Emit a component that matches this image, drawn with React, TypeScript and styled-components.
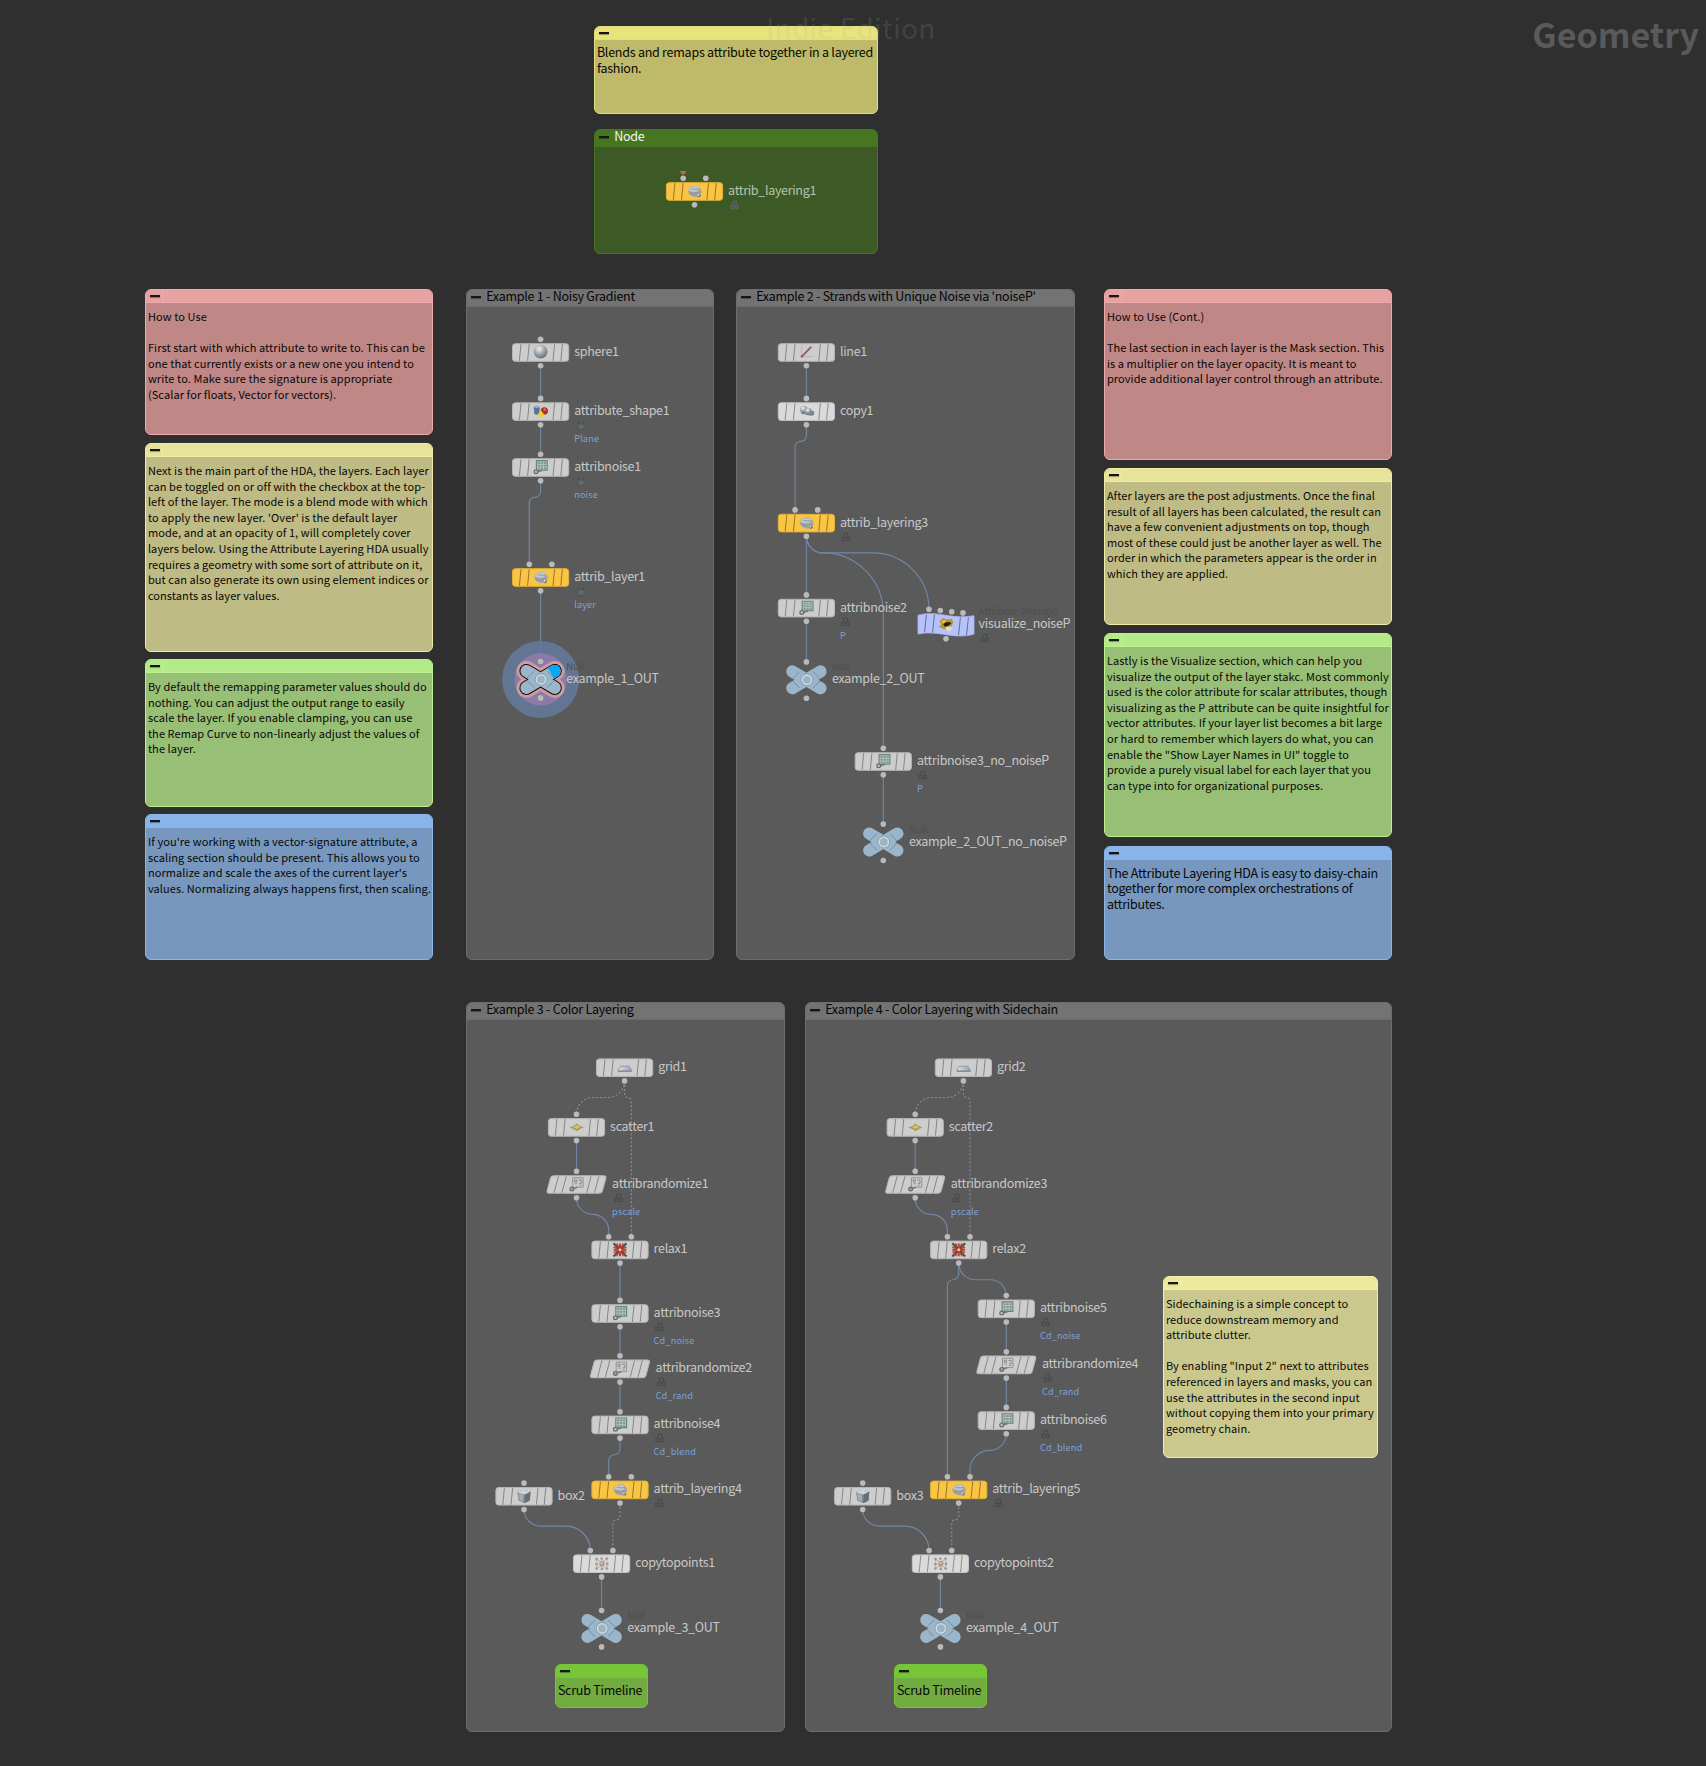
import React from "react";
import styled, { createGlobalStyle } from "styled-components";

const FONT = `"Noto Sans CJK SC", "Noto Sans", sans-serif`;

const GlobalStyle = createGlobalStyle`
  *, *::before, *::after { box-sizing: border-box; }
  body { margin: 0; background: #2f2f2f; font-family: ${FONT}; }
`;

/* ---------- page layout ---------- */

const Page = styled.main`
  position: relative;
  width: 1706px;
  height: 1766px;
  overflow: hidden;
  background: #2f2f2f;
  display: flex;
  flex-direction: column;
`;

const IntroStack = styled.section`
  display: flex;
  flex-direction: column;
  gap: 15px;
  width: 284px;
  margin: 26px 0 0 594px;
`;

const ExampleRow = styled.section<{ $top: number; $left: number }>`
  display: flex;
  align-items: flex-start;
  margin: ${(p) => p.$top}px 0 0 ${(p) => p.$left}px;
`;

const NoteColumn = styled.div<{ $ml?: number }>`
  display: flex;
  flex-direction: column;
  width: 288px;
  margin-left: ${(p) => p.$ml || 0}px;
`;

/* ---------- sticky notes ---------- */

type Tone = { head: string; body: string; line: string; ink?: string };

const TONES: Record<string, Tone> = {
  gold: { head: "#e8e37b", body: "#bfba6a", line: "#e4de7e" },
  red: { head: "#e9a2a2", body: "#c08787", line: "#eeaaab" },
  yellow: { head: "#e8e39a", body: "#bfbb84", line: "#f0eca6" },
  green: { head: "#b4ea88", body: "#98bf76", line: "#bcf190" },
  blue: { head: "#89b4ea", body: "#7797be", line: "#8cb5e8" },
  pale: { head: "#ede99d", body: "#cbc88e", line: "#f3efa6" },
  lime: { head: "#76c637", body: "#70ac40", line: "#76c43a" },
  forest: { head: "#46761f", body: "#3d5a26", line: "#47741f", ink: "#f2f5ef" },
  gray: { head: "#737373", body: "#5a5a5a", line: "#6d6d6d" },
};

const Panel = styled.article<{ $tone: Tone; $h: number; $w?: number; $mt?: number; $ml?: number }>`
  display: flex;
  flex-direction: column;
  flex: none;
  width: ${(p) => (p.$w ? `${p.$w}px` : "100%")};
  height: ${(p) => p.$h}px;
  margin-top: ${(p) => p.$mt || 0}px;
  margin-left: ${(p) => p.$ml || 0}px;
  border: 1px solid ${(p) => p.$tone.line};
  border-radius: 6px;
  background: ${(p) => p.$tone.body};
`;

const Header = styled.header<{ $tone: Tone; $h: number }>`
  display: flex;
  align-items: stretch;
  flex: none;
  height: ${(p) => p.$h - 1}px;
  background: ${(p) => p.$tone.head};
  border-bottom: 1px solid ${(p) => p.$tone.line};
  border-radius: 5px 5px 0 0;
`;

const Collapse = styled.span<{ $tone: Tone; $bar: number }>`
  flex: none;
  width: 17px;
  border-right: 1px solid ${(p) => p.$tone.line};
  &::before {
    content: "";
    display: block;
    width: 10px;
    height: 2px;
    margin: ${(p) => p.$bar}px 0 0 4.4px;
    background: #15151a;
    box-shadow: 0 1px 1px rgba(0, 0, 0, 0.35);
  }
`;

const Title = styled.h2<{ $ink?: string }>`
  margin: 0 0 0 2.2px;
  font: 400 12.5px/12px ${FONT};
  letter-spacing: -0.255px;
  color: ${(p) => p.$ink || "#050505"};
  white-space: nowrap;
`;

const NoteText = styled.p<{ $large?: boolean }>`
  margin: 0;
  padding: ${(p) => (p.$large ? 4.3 : 6.1)}px 0 0 ${(p) => (p.$large ? 1.9 : 1.9)}px;
  color: #080804;
  white-space: pre;
  font-size: ${(p) => (p.$large ? 12.5 : 11)}px;
  line-height: 15.6px;
  letter-spacing: ${(p) => (p.$large ? -0.245 : 0.087)}px;
`;

type NoteProps = { tone: string; h: number; w?: number; mt?: number; ml?: number; large?: boolean; text: string };

const Note = ({ tone, h, w, mt, ml, large, text }: NoteProps) => {
  const t = TONES[tone];
  return (
    <Panel $tone={t} $h={h} $w={w} $mt={mt} $ml={ml}>
      <Header $tone={t} $h={14}>
        <Collapse $tone={t} $bar={5} />
      </Header>
      <NoteText $large={large}>{text}</NoteText>
    </Panel>
  );
};

type BoxProps = { tone?: string; title: string; h: number; w?: number; ml?: number; children?: React.ReactNode };

const NetworkBox = ({ tone = "gray", title, h, w, ml, children }: BoxProps) => {
  const t = TONES[tone];
  return (
    <Panel as="section" $tone={t} $h={h} $w={w} $ml={ml}>
      <Header $tone={t} $h={18}>
        <Collapse $tone={t} $bar={6} />
        <Title $ink={t.ink}>{title}</Title>
      </Header>
      {children}
    </Panel>
  );
};

/* ---------- wires ---------- */

const WireLayer = styled.svg`
  position: absolute;
  inset: 0;
  pointer-events: none;
`;

type Pt = [number, number];

const DROP = 16.6;

function wirePath([x1, y1]: Pt, [x2, y2]: Pt) {
  const dx = x2 - x1;
  const span = Math.abs(dx);
  if (span < 0.5) return `M${x1},${y1}V${y2}`;
  const dir = Math.sign(dx);
  const mid = y1 + DROP;
  const r1 = Math.min(span / 2, DROP);
  const r2 = Math.min(span - r1, y2 - mid);
  const first = dir > 0 ? 0 : 1;
  return [
    `M${x1},${y1}V${mid - r1}`,
    `A${r1},${r1} 0 0 ${first} ${x1 + dir * r1},${mid}`,
    `H${x2 - dir * r2}`,
    `A${r2},${r2} 0 0 ${1 - first} ${x2},${mid + r2}`,
    `V${y2}`,
  ].join("");
}

/* ---------- node icons ---------- */

type IconName =
  | "layers" | "sphere" | "shapes" | "noise" | "random" | "line" | "copy"
  | "grid" | "scatter" | "relax" | "box" | "points" | "wrangle";

const SheetIcon = ({ cell, paper, edge }: { cell: string; paper: string; edge: string }) => (
  <g>
    <path d="M-4.2,-6.8H6.6V2.8H1.2L-4.2,3.2Z" fill={paper} stroke={edge} strokeWidth="1.1" />
    {[-5.4, -2.6, 0.2].map((y) =>
      [-2.8, 0.2, 3.2].map((x) => <rect key={`${x}${y}`} x={x} y={y} width="2.1" height="1.9" fill={cell} />)
    )}
    <path d="M1.4,2.8L-2.6,4.2" stroke="#6f7b78" strokeWidth="1.8" />
    <circle cx="-4.6" cy="4.4" r="1.9" fill="#b9bfbd" stroke="#626c6a" strokeWidth="1.2" />
  </g>
);

const NodeIcon = ({ name }: { name: IconName }) => {
  switch (name) {
    case "sphere":
      return <circle r="6.9" cy="-0.8" fill="url(#ball)" />;
    case "layers":
      return (
        <g>
          <path d="M-6.8,-1C-5.4,-4.8 0,-6.6 4,-5.2L7.2,-0.8C7,3.6 5,5.8 2,5.6C-1,5.6 -3,4.6 -5,3Z" fill="#a3a8ab" />
          <path d="M-6.8,-1.2C-4,-5 1,-6.2 4,-4.8C5.8,-2.6 4.6,0.2 0.4,0.6Q-3,0.6 -6.8,-1.2Z" fill="#c0c5c8" />
          <path d="M-5.8,0.8Q-1,2.8 6.2,0.4M-4.8,2.6Q-0.6,4.4 5,2.8M-3,-2.6Q1,-1.4 5.4,-2.4" fill="none" stroke="#858c91" strokeWidth="0.7" />
          <circle cx="4.6" cy="4.2" r="1.6" fill="#736c62" />
          <circle cx="4" cy="3.6" r="0.9" fill="#e9e6dc" />
        </g>
      );
    case "shapes":
      return (
        <g>
          <path d="M-7,-5Q-4,-6.8 -1,-5V2.2Q-3.6,4 -6.2,2.4Z" fill="#54759c" />
          <ellipse cx="-4" cy="-4.9" rx="2.9" ry="1.2" fill="#a3bad2" />
          <circle cx="3.7" cy="-0.6" r="3.7" fill="#ad3226" />
          <circle cx="4.1" cy="-2" r="1.2" fill="#dd7a68" />
          <path d="M0,-2L4.2,4.2Q0.4,6.6 -3.4,4.4Z" fill="#f2cf3c" />
        </g>
      );
    case "noise":
      return <SheetIcon cell="#7b968f" paper="#b6c6c1" edge="#66817b" />;
    case "random":
      return (
        <g>
          <path d="M-3.8,-6.6H6.6V2.8H1.2L-3.8,3Z" fill="#cdcdcd" stroke="#8b8b8b" strokeWidth="0.9" />
          <path d="M-2,-4.6H0.2V-2.4H-2ZM-1.6,-0.6H0.6M2,-4.4H4.8V-1H2.6M2.6,0.8H4.8" fill="none" stroke="#858585" strokeWidth="0.9" />
          <path d="M1.2,2.6L-2.8,4.4" stroke="#828282" strokeWidth="1.7" />
          <circle cx="-4.6" cy="4.6" r="1.9" fill="#a0a0a0" stroke="#6b6b6b" strokeWidth="1.2" />
        </g>
      );
    case "line":
      return (
        <g fill="none">
          <path d="M-4.6,-6V4.2H6.6M-4.6,4.2L0.6,-0.4" stroke="#b5b0b0" strokeWidth="0.9" />
          <path d="M-4.8,4.4L4.6,-5.4" stroke="#866866" strokeWidth="1.9" />
          <circle cx="-4.6" cy="4" r="1.2" fill="#95605e" />
          <circle cx="4.6" cy="-5.2" r="0.9" fill="#a07c7a" />
        </g>
      );
    case "copy":
      return (
        <g>
          <circle cx="-2.6" cy="-2" r="3.7" fill="url(#ball)" />
          <circle cx="2" cy="-0.2" r="3.3" fill="url(#ball)" />
          <circle cx="5.4" cy="1.4" r="2.5" fill="#7d8b92" />
          <path d="M-5.4,1.6L3,3.5L7,3.2" stroke="#6b7980" strokeWidth="1" fill="none" />
        </g>
      );
    case "grid":
      return (
        <g>
          <path d="M-3.8,-1.4H4.4Q6.2,0 7,3.4H-6.6Q-6,0 -3.8,-1.4Z" fill="url(#sheet)" stroke="#8b949f" strokeWidth="0.9" />
          <path d="M-6.6,3.7H7" stroke="#7d869a" strokeWidth="1.1" />
        </g>
      );
    case "scatter":
      return (
        <g>
          <path d="M-7,0.2Q-2,-1.4 0.4,-3.8Q2.4,-1.4 7.4,0Q3,1.6 0.6,4Q-2,1.8 -7,0.2Z" fill="#a39e56" />
          <path d="M-4,-0.2Q0,-1.4 1,-2.2Q2,-0.6 4,0Q1,0.8 0.2,1.8Q-1,0.4 -4,-0.2Z" fill="#d0c86b" />
        </g>
      );
    case "relax":
      return (
        <g>
          <path d="M-6.4,-6.6L-1,-1M6.4,-6.6L1,-1M-6.4,6.6L-1,1M6.4,6.6L1,1" stroke="#5a4d48" strokeWidth="2.2" />
          <path d="M0,-6.4V6.4M-6.4,0H6.4" stroke="#ab4436" strokeWidth="2" />
          <path d="M-3.2,-6.4L-1.2,-2M3.2,-6.4L1.2,-2M-3.2,6.4L-1.2,2M3.2,6.4L1.2,2M-6.4,-2.8L-2,-1M6.4,-2.8L2,-1M-6.4,2.8L-2,1M6.4,2.8L2,1" stroke="#b3493b" strokeWidth="1.5" />
          <path d="M-3,-3L3,3M3,-3L-3,3" stroke="#98382c" strokeWidth="1.8" />
          <circle r="1.5" fill="#e7cdb0" />
        </g>
      );
    case "box":
      return (
        <g>
          <path d="M-6.6,-4.2Q-1,-8 6.6,-4.6L5.8,4.2L0.6,7L-5.4,4.4Z" fill="#848d94" />
          <path d="M-6.6,-4.2Q-1,-8 6.6,-4.6Q4,-2 1,-1.8Q-3,-2 -6.6,-4.2Z" fill="#cfd4d8" />
          <path d="M1,-1.8L6.6,-4.6L5.8,4.2L0.6,7Z" fill="#656f78" />
          <path d="M-5.2,-2.8L-0.8,-1.2L-0.8,5.2L-4.4,3.6Z" fill="#a7afb5" />
        </g>
      );
    case "points":
      return (
        <g>
          <path d="M-5,-4.4L0.2,-1.4L5,-4.6M-5,4.6L0.2,1.4L5.2,4.6M0.2,-1.4V5M-5,-4.4V4.6M5.2,-4.6V4.6" stroke="#c3bab2" strokeWidth="1.1" fill="none" />
          <circle r="2.8" cx="0.4" fill="#ae9a90" />
          <circle r="1.1" cx="0" cy="-0.6" fill="#d8cabd" />
          {[[-5, -4.6], [0, -5], [5.2, -5], [-5, 0.6], [5.6, 0.4], [-5, 5], [0.4, 5.4], [5.2, 5]].map(([x, y]) => (
            <circle key={`${x}${y}`} cx={x} cy={y} r="1.4" fill="#a19c97" />
          ))}
        </g>
      );
    case "wrangle":
      return (
        <g>
          <path d="M-6.6,-3.6L-3,-6.8L1,-5.2L5.6,-6L7.4,-2.6L5.8,1L3,4.8L-2,4.4L-7,2.2L-4.8,-0.8Z" fill="#b5972a" />
          <path d="M-5,-3L-2,-5L0.4,-3.6L-2.4,-1.4Z" fill="#e1c443" />
          <path d="M-2.8,-0.4Q1.4,-4.4 5.4,-1.6Q3,1.8 -1,2Z" fill="#211e17" />
          <path d="M-0.6,2.4L4.6,1.8L6.4,4.8L3.2,6.8L0.4,5.4Z" fill="#dcdcd2" />
        </g>
      );
  }
};

/* ---------- nodes ---------- */

const NodeRoot = styled.div<{ $x: number; $y: number }>`
  position: absolute;
  left: ${(p) => p.$x}px;
  top: ${(p) => p.$y}px;
  display: flex;
  align-items: flex-start;
  height: 80px;
`;

const NodeArt = styled.svg`
  flex: none;
  display: block;
  overflow: visible;
`;

const Caption = styled.div<{ $dx: number; $dy: number }>`
  display: flex;
  flex-direction: column;
  margin: ${(p) => p.$dy}px 0 0 ${(p) => p.$dx - 0.4}px;
  white-space: nowrap;
`;

const TypeHint = styled.span`
  height: 10px;
  margin-top: 20.5px;
  font-size: 9.5px;
  line-height: 12px;
  letter-spacing: 0.07px;
  color: #4e4e4e;
`;

const NodeName = styled.span<{ $color: string }>`
  height: 16px;
  font-size: 12.5px;
  line-height: 16px;
  letter-spacing: -0.31px;
  color: ${(p) => p.$color};
`;

const LockMark = styled.svg`
  display: block;
  width: 14px;
  height: 14px;
  margin-left: -0.6px;
`;

const Comment = styled.span`
  font-size: 9.2px;
  line-height: 12px;
  letter-spacing: 0.13px;
  color: #7ba1d8;
`;

type Shape = "plain" | "light" | "gold" | "skew" | "wave" | "null" | "active";
type NodeSpec = {
  x: number; y: number; name: string; shape: Shape; icon?: IconName; inputs?: number;
  lock?: "padlock" | "tree"; comment?: string; hint?: string; labelColor?: string; flagged?: boolean;
};

const FILLS: Record<string, { fill: string; edge: string; slash: string }> = {
  plain: { fill: "#cdcdcd", edge: "#b6b6b6", slash: "#858585" },
  light: { fill: "#dadada", edge: "#c3c3c3", slash: "#8c8c8c" },
  gold: { fill: "#fac542", edge: "#e3b038", slash: "#94762c" },
  skew: { fill: "#cdcdcd", edge: "#b8b8b8", slash: "#858585" },
  wave: { fill: "#b5c2fc", edge: "#a9b6ee", slash: "#67708f" },
};

const HALF: Record<Shape, number> = { plain: 34, light: 34, gold: 34, skew: 36, wave: 33, null: 26, active: 26 };

const Dot = ({ x = 0, y }: { x?: number; y: number }) => <circle cx={x} cy={y} r="2.8" fill="#bababa" />;

const ARMS = "M-14.1,-8.4L14.1,8.4M-14.1,8.4L14.1,-8.4";

const NullShape = ({ active }: { active?: boolean }) => (
  <g>
    {active && (
      <g>
        <circle r="38.5" fill="#63799a" fillOpacity="0.88" />
        <circle r="26.2" fill="#8f7cab" fillOpacity="0.9" />
        <path d={ARMS} stroke="#d09a9f" strokeWidth="20" strokeLinecap="round" />
        <path d={ARMS} stroke="#0d0d0d" strokeWidth="14.2" strokeLinecap="round" />
      </g>
    )}
    <path d={ARMS} stroke="#9bb6ca" strokeWidth="12.2" strokeLinecap="round" />
    {active && (
      <path transform="rotate(-30.8)" d="M12,-6.1H16.4A6.1,6.1 0 0 1 16.4,6.1H12Z" fill="#08a9f4" />
    )}
    <g stroke="#6f8ea3" strokeWidth="1">
      <path d="M-13.6,-1.2L-6.6,-8.2M13.6,-1.2L6.6,-8.2M-13.6,1.2L-6.6,8.2M13.6,1.2L6.6,8.2" />
    </g>
    <circle r="5.8" cx="0.5" fill="#8ea8b9" stroke="#74909f" strokeWidth="0.8" />
    <circle r="4.7" cx="0.5" fill="#9cb4c3" stroke="#cddbe3" strokeWidth="1.6" />
  </g>
);

const BodyShape = ({ shape }: { shape: Shape }) => {
  const c = FILLS[shape];
  if (shape === "wave")
    return (
      <g>
        <path
          d="M-28,-9.4C-20,-12 -10,-11.2 0,-9.4C10,-7.6 20,-7.4 28,-9V9.4C20,12 10,11.6 0,10C-10,8.2 -20,7.4 -28,9.4Z"
          fill={c.fill} stroke={c.edge} strokeWidth="0.8"
        />
        <path d="M-19.6,-10L-21.4,7.6M-11.6,-10L-13.4,8M14.4,-7.4L12.6,10.6M22.4,-7.4L20.6,10.6" stroke={c.slash} strokeWidth="1" />
      </g>
    );
  const skew = shape === "skew";
  return (
    <g transform={skew ? "skewX(-15)" : undefined}>
      <rect x={skew ? -27.7 : -28.1} y="-8.7" width={skew ? 55.4 : 56.2} height="17.6" rx="2.8" fill={c.fill} stroke={c.edge} strokeWidth="1" />
      <path
        d={skew
          ? "M-20.2,-8.2V8.4M-12.4,-8.2V8.4M12.4,-8.2V8.4M20.2,-8.2V8.4"
          : "M-19.6,-8.2L-21.2,8.4M-11.4,-8.2L-13,8.4M14,-8.2L12.4,8.4M21.8,-8.2L20.2,8.4"}
        stroke={c.slash} strokeWidth="1"
      />
    </g>
  );
};

const Lock = ({ kind, light }: { kind: "padlock" | "tree"; light?: boolean }) => (
  <LockMark viewBox="-7 -7 14 14">
    {kind === "padlock" ? (
      <g>
        <path d="M-2.2,-0.6V-3.8M2.2,-0.6V-3.8" fill="none" stroke="#494f4c" strokeWidth="1.1" />
        <rect x="-3" y="-1" width="6" height="5.2" fill="#5b7067" stroke="#495650" strokeWidth="0.8" />
      </g>
    ) : (
      <g transform="translate(-0.6 0)" fill={light ? "#4b5560" : "none"} stroke={light ? "#5a6468" : "#464849"} strokeWidth="1">
        <path d="M-1.8,-0.4L-1.2,-3.8H2.2V-0.4" />
        <path d="M-3.6,3.6V0.2H-0.6V3.6ZM0.9,3.6V0.2H3.7V3.6Z" />
      </g>
    )}
  </LockMark>
);

const INPUT_X: Record<number, number[]> = { 0: [], 1: [0], 2: [-11.3, 11.3], 4: [-17, -5.7, 5.7, 17] };

const GraphNode = ({ x, y, name, shape, icon, inputs = 0, lock, comment, hint, labelColor = "#c8c8c8", flagged }: NodeSpec) => {
  const half = HALF[shape];
  const isNull = shape === "null" || shape === "active";
  const left = Math.floor(x - half);
  const top = Math.floor(y - 40);
  const dx = x - half - left;
  const dy = y - 40 - top;
  return (
    <NodeRoot $x={left} $y={top}>
      <NodeArt width={half * 2} height={80} viewBox={`${-half - dx} ${-40 - dy} ${half * 2} 80`}>
        {isNull ? <NullShape active={shape === "active"} /> : <BodyShape shape={shape} />}
        {icon && <NodeIcon name={icon} />}
        {INPUT_X[inputs].map((ix, i) => (
          <Dot key={ix} x={ix} y={isNull ? -17.9 : inputs === 4 ? -15.4 + i * 1.2 : -13.1} />
        ))}
        <Dot y={isNull ? 18.5 : shape === "wave" ? 14 : 13.3} />
        {flagged && <path d="M-14.5,-20.4H-8.1L-9.8,-17.2H-12.8Z" fill="#c46352" />}
      </NodeArt>
      <Caption $dx={dx} $dy={dy}>
        <TypeHint>{hint}</TypeHint>
        <NodeName $color={labelColor}>{name}</NodeName>
        {lock && <Lock kind={lock} light={flagged} />}
        {comment && <Comment>{comment}</Comment>}
      </Caption>
    </NodeRoot>
  );
};

const SHIFT = 338.7;

const NODES: NodeSpec[] = [
  { x: 694.5, y: 191.4, name: "attrib_layering1", shape: "gold", icon: "layers", inputs: 2, lock: "tree", labelColor: "#b5c2ad", flagged: true },

  { x: 540.6, y: 352.4, name: "sphere1", shape: "plain", icon: "sphere", inputs: 1 },
  { x: 540.6, y: 411.5, name: "attribute_shape1", shape: "plain", icon: "shapes", inputs: 1, lock: "padlock", comment: "Plane" },
  { x: 540.6, y: 467.4, name: "attribnoise1", shape: "plain", icon: "noise", inputs: 1, lock: "padlock", comment: "noise" },
  { x: 540.6, y: 577.4, name: "attrib_layer1", shape: "gold", icon: "layers", inputs: 2, lock: "padlock", comment: "layer" },
  { x: 540.6, y: 679.4, name: "example_1_OUT", shape: "active", inputs: 1, hint: "Null" },

  { x: 806.4, y: 352.4, name: "line1", shape: "plain", icon: "line" },
  { x: 806.4, y: 411.5, name: "copy1", shape: "light", icon: "copy", inputs: 1 },
  { x: 806.4, y: 523, name: "attrib_layering3", shape: "gold", icon: "layers", inputs: 2, lock: "tree" },
  { x: 806.4, y: 608, name: "attribnoise2", shape: "plain", icon: "noise", inputs: 1, lock: "tree", comment: "P" },
  { x: 806.4, y: 679.8, name: "example_2_OUT", shape: "null", inputs: 1, hint: "Null" },
  { x: 946, y: 624.7, name: "visualize_noiseP", shape: "wave", icon: "wrangle", inputs: 4, lock: "tree", hint: "Attribute Wrangle" },
  { x: 883.3, y: 761.4, name: "attribnoise3_no_noiseP", shape: "plain", icon: "noise", inputs: 1, lock: "tree", comment: "P" },
  { x: 883.3, y: 842, name: "example_2_OUT_no_noiseP", shape: "null", inputs: 1, hint: "Null" },

  { x: 624.6, y: 1067.6, name: "grid1", shape: "plain", icon: "grid" },
  { x: 576.5, y: 1127.3, name: "scatter1", shape: "plain", icon: "scatter", inputs: 1 },
  { x: 576.5, y: 1184.4, name: "attribrandomize1", shape: "skew", icon: "random", inputs: 1, lock: "tree", comment: "pscale" },
  { x: 620, y: 1249.8, name: "relax1", shape: "plain", icon: "relax", inputs: 2 },
  { x: 620, y: 1313.4, name: "attribnoise3", shape: "plain", icon: "noise", inputs: 1, lock: "tree", comment: "Cd_noise" },
  { x: 620, y: 1368.8, name: "attribrandomize2", shape: "skew", icon: "random", inputs: 1, lock: "tree", comment: "Cd_rand" },
  { x: 620, y: 1424.8, name: "attribnoise4", shape: "plain", icon: "noise", inputs: 1, lock: "tree", comment: "Cd_blend" },
  { x: 620, y: 1489.8, name: "attrib_layering4", shape: "gold", icon: "layers", inputs: 2, lock: "tree" },
  { x: 524, y: 1496.2, name: "box2", shape: "plain", icon: "box", inputs: 1 },
  { x: 601.6, y: 1563.6, name: "copytopoints1", shape: "light", icon: "points", inputs: 2 },
  { x: 601.6, y: 1628.4, name: "example_3_OUT", shape: "null", inputs: 1, hint: "Null" },

  { x: 624.7 + SHIFT, y: 1067.6, name: "grid2", shape: "plain", icon: "grid" },
  { x: 576.5 + SHIFT, y: 1127.3, name: "scatter2", shape: "plain", icon: "scatter", inputs: 1 },
  { x: 576.5 + SHIFT, y: 1184.4, name: "attribrandomize3", shape: "skew", icon: "random", inputs: 1, lock: "tree", comment: "pscale" },
  { x: 620 + SHIFT, y: 1249.8, name: "relax2", shape: "plain", icon: "relax", inputs: 2 },
  { x: 1006.3, y: 1308.7, name: "attribnoise5", shape: "plain", icon: "noise", inputs: 1, lock: "tree", comment: "Cd_noise" },
  { x: 1006.3, y: 1364.8, name: "attribrandomize4", shape: "skew", icon: "random", inputs: 1, lock: "tree", comment: "Cd_rand" },
  { x: 1006.3, y: 1420.5, name: "attribnoise6", shape: "plain", icon: "noise", inputs: 1, lock: "tree", comment: "Cd_blend" },
  { x: 620 + SHIFT, y: 1489.8, name: "attrib_layering5", shape: "gold", icon: "layers", inputs: 2, lock: "tree" },
  { x: 524 + SHIFT, y: 1496.2, name: "box3", shape: "plain", icon: "box", inputs: 1 },
  { x: 601.7 + SHIFT, y: 1563.6, name: "copytopoints2", shape: "light", icon: "points", inputs: 2 },
  { x: 601.7 + SHIFT, y: 1628.4, name: "example_4_OUT", shape: "null", inputs: 1, hint: "Null" },
];

/* Each link runs from a node's output to one of the inputs of another node. */
const LINKS: [string, string, number, boolean?][] = [
  ["sphere1", "attribute_shape1", 0],
  ["attribute_shape1", "attribnoise1", 0],
  ["attribnoise1", "attrib_layer1", 0],
  ["attrib_layer1", "example_1_OUT", 0],
  ["line1", "copy1", 0],
  ["copy1", "attrib_layering3", 0],
  ["attrib_layering3", "attribnoise2", 0],
  ["attrib_layering3", "visualize_noiseP", 0],
  ["attrib_layering3", "attribnoise3_no_noiseP", 0],
  ["attribnoise2", "example_2_OUT", 0],
  ["attribnoise3_no_noiseP", "example_2_OUT_no_noiseP", 0],
  ["grid1", "scatter1", 0, true],
  ["grid1", "relax1", 1, true],
  ["scatter1", "attribrandomize1", 0],
  ["attribrandomize1", "relax1", 0],
  ["relax1", "attribnoise3", 0],
  ["attribnoise3", "attribrandomize2", 0],
  ["attribrandomize2", "attribnoise4", 0],
  ["attribnoise4", "attrib_layering4", 0],
  ["attrib_layering4", "copytopoints1", 1, true],
  ["box2", "copytopoints1", 0],
  ["copytopoints1", "example_3_OUT", 0],
  ["grid2", "scatter2", 0, true],
  ["grid2", "relax2", 1, true],
  ["scatter2", "attribrandomize3", 0],
  ["attribrandomize3", "relax2", 0],
  ["relax2", "attrib_layering5", 0],
  ["relax2", "attribnoise5", 0],
  ["attribnoise5", "attribrandomize4", 0],
  ["attribrandomize4", "attribnoise6", 0],
  ["attribnoise6", "attrib_layering5", 1],
  ["attrib_layering5", "copytopoints2", 1, true],
  ["box3", "copytopoints2", 0],
  ["copytopoints2", "example_4_OUT", 0],
];

const byName = new Map(NODES.map((n) => [n.name, n]));

const Wires = () => (
  <WireLayer width="1706" height="1766">
    <defs>
      <radialGradient id="ball" cx="0.4" cy="0.3" r="0.7">
        <stop offset="0" stopColor="#eef1f3" />
        <stop offset="0.5" stopColor="#a4adb4" />
        <stop offset="1" stopColor="#656f77" />
      </radialGradient>
      <linearGradient id="sheet" x1="0" y1="0" x2="1" y2="0">
        <stop offset="0" stopColor="#dde1e6" />
        <stop offset="1" stopColor="#96a0ae" />
      </linearGradient>
    </defs>
    {LINKS.map(([from, to, slot, dotted]) => {
      const a = byName.get(from)!;
      const b = byName.get(to)!;
      const inY = b.shape === "null" || b.shape === "active" ? -17.9 : b.shape === "wave" ? -15.4 : -13.1;
      const start: Pt = [a.x, a.y + 13.3];
      const end: Pt = [b.x + INPUT_X[b.inputs || 0][slot], b.y + inY];
      return (
        <path
          key={`${from}-${to}`}
          d={wirePath(start, end)}
          fill="none"
          stroke={dotted ? "#8590a6" : "#7087a5"}
          strokeWidth="1.15"
          strokeDasharray={dotted ? "1.9 2.1" : undefined}
        />
      );
    })}
  </WireLayer>
);

/* ---------- watermarks ---------- */

const Edition = styled.div`
  position: absolute;
  left: 766px;
  top: 7px;
  font-size: 28px;
  line-height: 40px;
  letter-spacing: 0.3px;
  white-space: nowrap;
  color: rgba(170, 170, 170, 0.17);
`;

const ContextLabel = styled.div`
  position: absolute;
  right: 7px;
  top: 14px;
  font-size: 34px;
  font-weight: 700;
  line-height: 40px;
  color: #5a5a5a;
`;

/* ---------- texts ---------- */

const HOW_TO = `How to Use

First start with which attribute to write to. This can be
one that currently exists or a new one you intend to
write to. Make sure the signature is appropriate
(Scalar for floats, Vector for vectors).`;

const LAYERS = `Next is the main part of the HDA, the layers. Each layer
can be toggled on or off with the checkbox at the top-
left of the layer. The mode is a blend mode with which
to apply the new layer. 'Over' is the default layer
mode, and at an opacity of 1, will completely cover
layers below. Using the Attribute Layering HDA usually
requires a geometry with some sort of attribute on it,
but can also generate its own using element indices or
constants as layer values.`;

const REMAP = `By default the remapping parameter values should do
nothing. You can adjust the output range to easily
scale the layer. If you enable clamping, you can use
the Remap Curve to non-linearly adjust the values of
the layer.`;

const SCALING = `If you're working with a vector-signature attribute, a
scaling section should be present. This allows you to
normalize and scale the axes of the current layer's
values. Normalizing always happens first, then scaling.`;

const MASKS = `How to Use (Cont.)

The last section in each layer is the Mask section. This
is a multiplier on the layer opacity. It is meant to
provide additional layer control through an attribute.`;

const POST = `After layers are the post adjustments. Once the final
result of all layers has been calculated, the result can
have a few convenient adjustments on top, though
most of these could just be another layer as well. The
order in which the parameters appear is the order in
which they are applied.`;

const VISUALIZE = `Lastly is the Visualize section, which can help you
visualize the output of the layer stakc. Most commonly
used is the color attribute for scalar attributes, though
visualizing as the P attribute can be quite insightful for
vector attributes. If your layer list becomes a bit large
or hard to remember which layers do what, you can
enable the "Show Layer Names in UI" toggle to
provide a purely visual label for each layer that you
can type into for organizational purposes.`;

const CHAIN = `The Attribute Layering HDA is easy to daisy-chain
together for more complex orchestrations of
attributes.`;

const SIDECHAIN = `Sidechaining is a simple concept to
reduce downstream memory and
attribute clutter.

By enabling "Input 2" next to attributes
referenced in layers and masks, you can
use the attributes in the second input
without copying them into your primary
geometry chain.`;

export default function App() {
  return (
    <Page>
      <GlobalStyle />
      <IntroStack>
        <Note tone="gold" h={88} large text={"Blends and remaps attribute together in a layered\nfashion."} />
        <NetworkBox tone="forest" title="Node" h={125} />
      </IntroStack>

      <ExampleRow $top={35} $left={145}>
        <NoteColumn>
          <Note tone="red" h={146} text={HOW_TO} />
          <Note tone="yellow" h={209} mt={8} text={LAYERS} />
          <Note tone="green" h={148} mt={7} text={REMAP} />
          <Note tone="blue" h={146} mt={7} text={SCALING} />
        </NoteColumn>
        <NetworkBox title="Example 1 - Noisy Gradient" w={248} h={671} ml={33} />
        <NetworkBox title="Example 2 - Strands with Unique Noise via 'noiseP'" w={339} h={671} ml={22} />
        <NoteColumn $ml={29}>
          <Note tone="red" h={171} text={MASKS} />
          <Note tone="yellow" h={157} mt={8} text={POST} />
          <Note tone="green" h={204} mt={8} text={VISUALIZE} />
          <Note tone="blue" h={113.6} mt={9.4} large text={CHAIN} />
        </NoteColumn>
      </ExampleRow>

      <ExampleRow $top={42.4} $left={466}>
        <NetworkBox title="Example 3 - Color Layering" w={319} h={730}>
          <Note tone="lime" w={93} h={44} mt={643.6} ml={88} large text="Scrub Timeline" />
        </NetworkBox>
        <NetworkBox title="Example 4 - Color Layering with Sidechain" w={587} h={730} ml={20}>
          <Note tone="pale" w={215} h={182} mt={255.6} ml={357} text={SIDECHAIN} />
          <Note tone="lime" w={93} h={44} mt={206} ml={88} large text="Scrub Timeline" />
        </NetworkBox>
      </ExampleRow>

      <Wires />
      {NODES.map((n) => (
        <GraphNode key={n.name} {...n} />
      ))}
      <Edition>Indie Edition</Edition>
      <ContextLabel>Geometry</ContextLabel>
    </Page>
  );
}
